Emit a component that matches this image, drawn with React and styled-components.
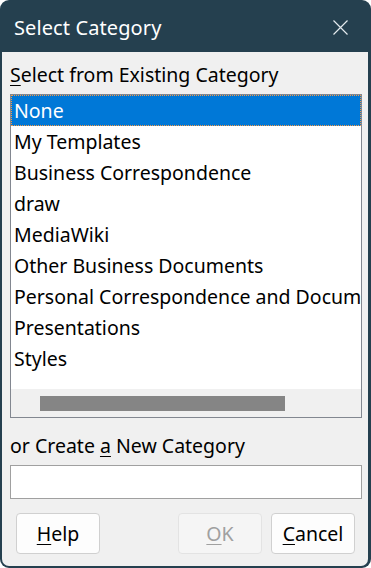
import React from "react";
import styled, { createGlobalStyle } from "styled-components";

const GlobalStyle = createGlobalStyle`
  html, body {
    margin: 0;
    padding: 0;
    background: #ffffff;
  }
  body {
    font-family: "Noto Sans", "Open Sans", sans-serif;
  }
`;

const categories = [
  "None",
  "My Templates",
  "Business Correspondence",
  "draw",
  "MediaWiki",
  "Other Business Documents",
  "Personal Correspondence and Documents",
  "Presentations",
  "Styles",
];

const App = () => {
  return (
    <>
      <GlobalStyle />
      <Window>
        <TitleBar>
          <Title>Select Category</Title>
          <CloseButton aria-label="Close">
            <svg width="15" height="15" viewBox="0 0 15 15">
              <path d="M0.5 0.5 L14.5 14.5 M14.5 0.5 L0.5 14.5" stroke="#e4eaee" strokeWidth="1.2" fill="none" />
            </svg>
          </CloseButton>
        </TitleBar>
        <Body>
          <Label>
            <u>S</u>elect from Existing Category
          </Label>
          <ListBox>
            <Rows>
              {categories.map((c, i) => (
                <Row key={c} $selected={i === 0}>
                  {c}
                </Row>
              ))}
            </Rows>
            <HScroll>
              <Thumb />
            </HScroll>
          </ListBox>
          <Label $top={14}>
            or Create <u>a</u> New Category
          </Label>
          <TextInput type="text" />
          <ButtonRow>
            <Button>
              <u>H</u>elp
            </Button>
            <Spacer />
            <Button disabled>
              <u>O</u>K
            </Button>
            <Button>
              <u>C</u>ancel
            </Button>
          </ButtonRow>
        </Body>
      </Window>
    </>
  );
};

export default App;

const Window = styled.div`
  width: 371px;
  height: 568px;
  box-sizing: border-box;
  background: #25404f;
  border-radius: 9px;
  padding: 0 3px 2px 2px;
  display: flex;
  flex-direction: column;
  overflow: hidden;
`;

const TitleBar = styled.div`
  height: 52px;
  box-sizing: border-box;
  flex: none;
  display: flex;
  align-items: center;
  justify-content: space-between;
  padding: 3px 20px 0 12px;
`;

const Title = styled.div`
  color: #ffffff;
  font-size: 20px;
  letter-spacing: 0.1px;
`;

const CloseButton = styled.div`
  width: 15px;
  height: 15px;
  display: flex;
`;

const Body = styled.div`
  flex: 1;
  background: #f0f0f0;
  border-radius: 0 0 7px 7px;
  padding: 9px 6px 0 8px;
  display: flex;
  flex-direction: column;
  color: #000000;
`;

const Label = styled.div`
  font-size: 19.5px;
  line-height: 27px;
  margin-top: ${(p) => p.$top || 0}px;
  margin-bottom: 6px;
  white-space: nowrap;
  u {
    text-underline-offset: 3px;
  }
`;

const ListBox = styled.div`
  height: 324px;
  box-sizing: border-box;
  border: 1px solid #828790;
  background: #ffffff;
  display: flex;
  flex-direction: column;
`;

const Rows = styled.div`
  flex: 1;
  overflow: hidden;
`;

const Row = styled.div`
  height: 31px;
  line-height: 31px;
  padding-left: 3px;
  font-size: 19.5px;
  white-space: nowrap;
  overflow: hidden;
  box-sizing: border-box;
  background: ${(p) => (p.$selected ? "#0078d7" : "transparent")};
  color: ${(p) => (p.$selected ? "#ffffff" : "#000000")};
  outline: ${(p) => (p.$selected ? "1px dotted #f59a45" : "none")};
  outline-offset: -1px;
`;

const HScroll = styled.div`
  height: 28px;
  flex: none;
  background: #f0f0f0;
  display: flex;
  align-items: center;
  padding-left: 29px;
`;

const Thumb = styled.div`
  width: 245px;
  height: 15px;
  background: #858585;
`;

const TextInput = styled.input`
  height: 34px;
  box-sizing: border-box;
  border: 1px solid #a0a0a0;
  background: #ffffff;
  outline: none;
  margin: 0;
  padding: 0 4px;
  font-family: inherit;
  font-size: 18px;
`;

const ButtonRow = styled.div`
  display: flex;
  gap: 9px;
  margin-top: 14px;
  padding: 0 7px 0 6px;
`;

const Spacer = styled.div`
  flex: 1;
`;

const Button = styled.button`
  width: 84px;
  height: 41px;
  box-sizing: border-box;
  border: 1px solid #d0d0d0;
  border-radius: 4px;
  background: #fdfdfd;
  font-family: inherit;
  font-size: 19.5px;
  color: #000000;
  padding: 0;
  u {
    text-underline-offset: 3px;
  }
  &:disabled {
    background: #f5f5f5;
    border-color: #e3e3e3;
    color: #a0a0a0;
  }
`;
